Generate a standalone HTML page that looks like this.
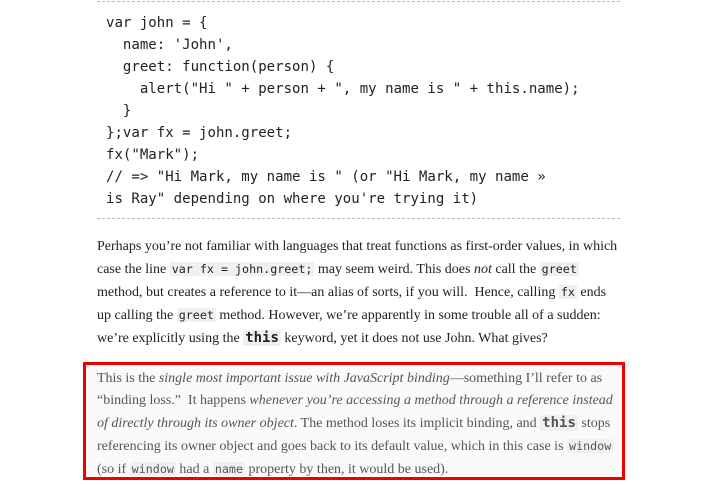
<!DOCTYPE html>
<html><head><meta charset="utf-8"><style>
body{margin:0;background:#fff;width:703px;height:485px;overflow:hidden;font-family:"Liberation Serif",serif;}
.pre{position:absolute;left:97px;top:1px;width:523px;height:216px;border-top:1px dashed #bbb;border-bottom:1px dashed #bbb;}
.pre pre{margin:0;position:absolute;left:9px;top:10px;font-family:"DejaVu Sans Mono",monospace;font-size:14.05px;line-height:22px;color:#222;}
.p{position:absolute;left:97px;width:524px;font-size:14px;line-height:22px;color:#222;}
code{font-family:"DejaVu Sans Mono",monospace;font-size:11.7px;background:#f0f0f0;padding:0 2px;}
code.b{font-weight:bold;font-size:14px;}
.box{position:absolute;left:83px;top:362px;width:536px;height:112px;border:3px solid #e00;background:#fafafa;}
.box .p{left:11px;top:3px;color:#555;width:525px;}
</style></head><body>
<div class="pre"><pre>var john = {
  name: 'John',
  greet: function(person) {
    alert("Hi " + person + ", my name is " + this.name);
  }
};var fx = john.greet;
fx("Mark");
// =&gt; "Hi Mark, my name is " (or "Hi Mark, my name »
is Ray" depending on where you're trying it)</pre></div>
<div class="p" style="top:236px">Perhaps you’re not familiar with languages that treat functions as first-order values, in which case the line <code>var fx = john.greet;</code> may seem weird. This does <i>not</i> call the <code>greet</code> method, but creates a reference to it—an alias of sorts, if you will.&nbsp; Hence, calling <code>fx</code> ends up calling the <code>greet</code> method. However, we’re apparently in some trouble all of a sudden: we’re explicitly using the <code class="b">this</code> keyword, yet it does not use John. What gives?</div>
<div class="box"><div class="p">This is the <i>single most important issue with JavaScript binding</i>—something I’ll refer to as “binding loss.”&nbsp; It happens <i>whenever you’re accessing a method through a reference instead of directly through its owner object</i>. The method loses its implicit binding, and <code class="b">this</code> stops referencing its owner object and goes back to its default value, which in this case is <code>window</code> (so if <code>window</code> had a <code>name</code> property by then, it would be used).</div></div>
</body></html>
